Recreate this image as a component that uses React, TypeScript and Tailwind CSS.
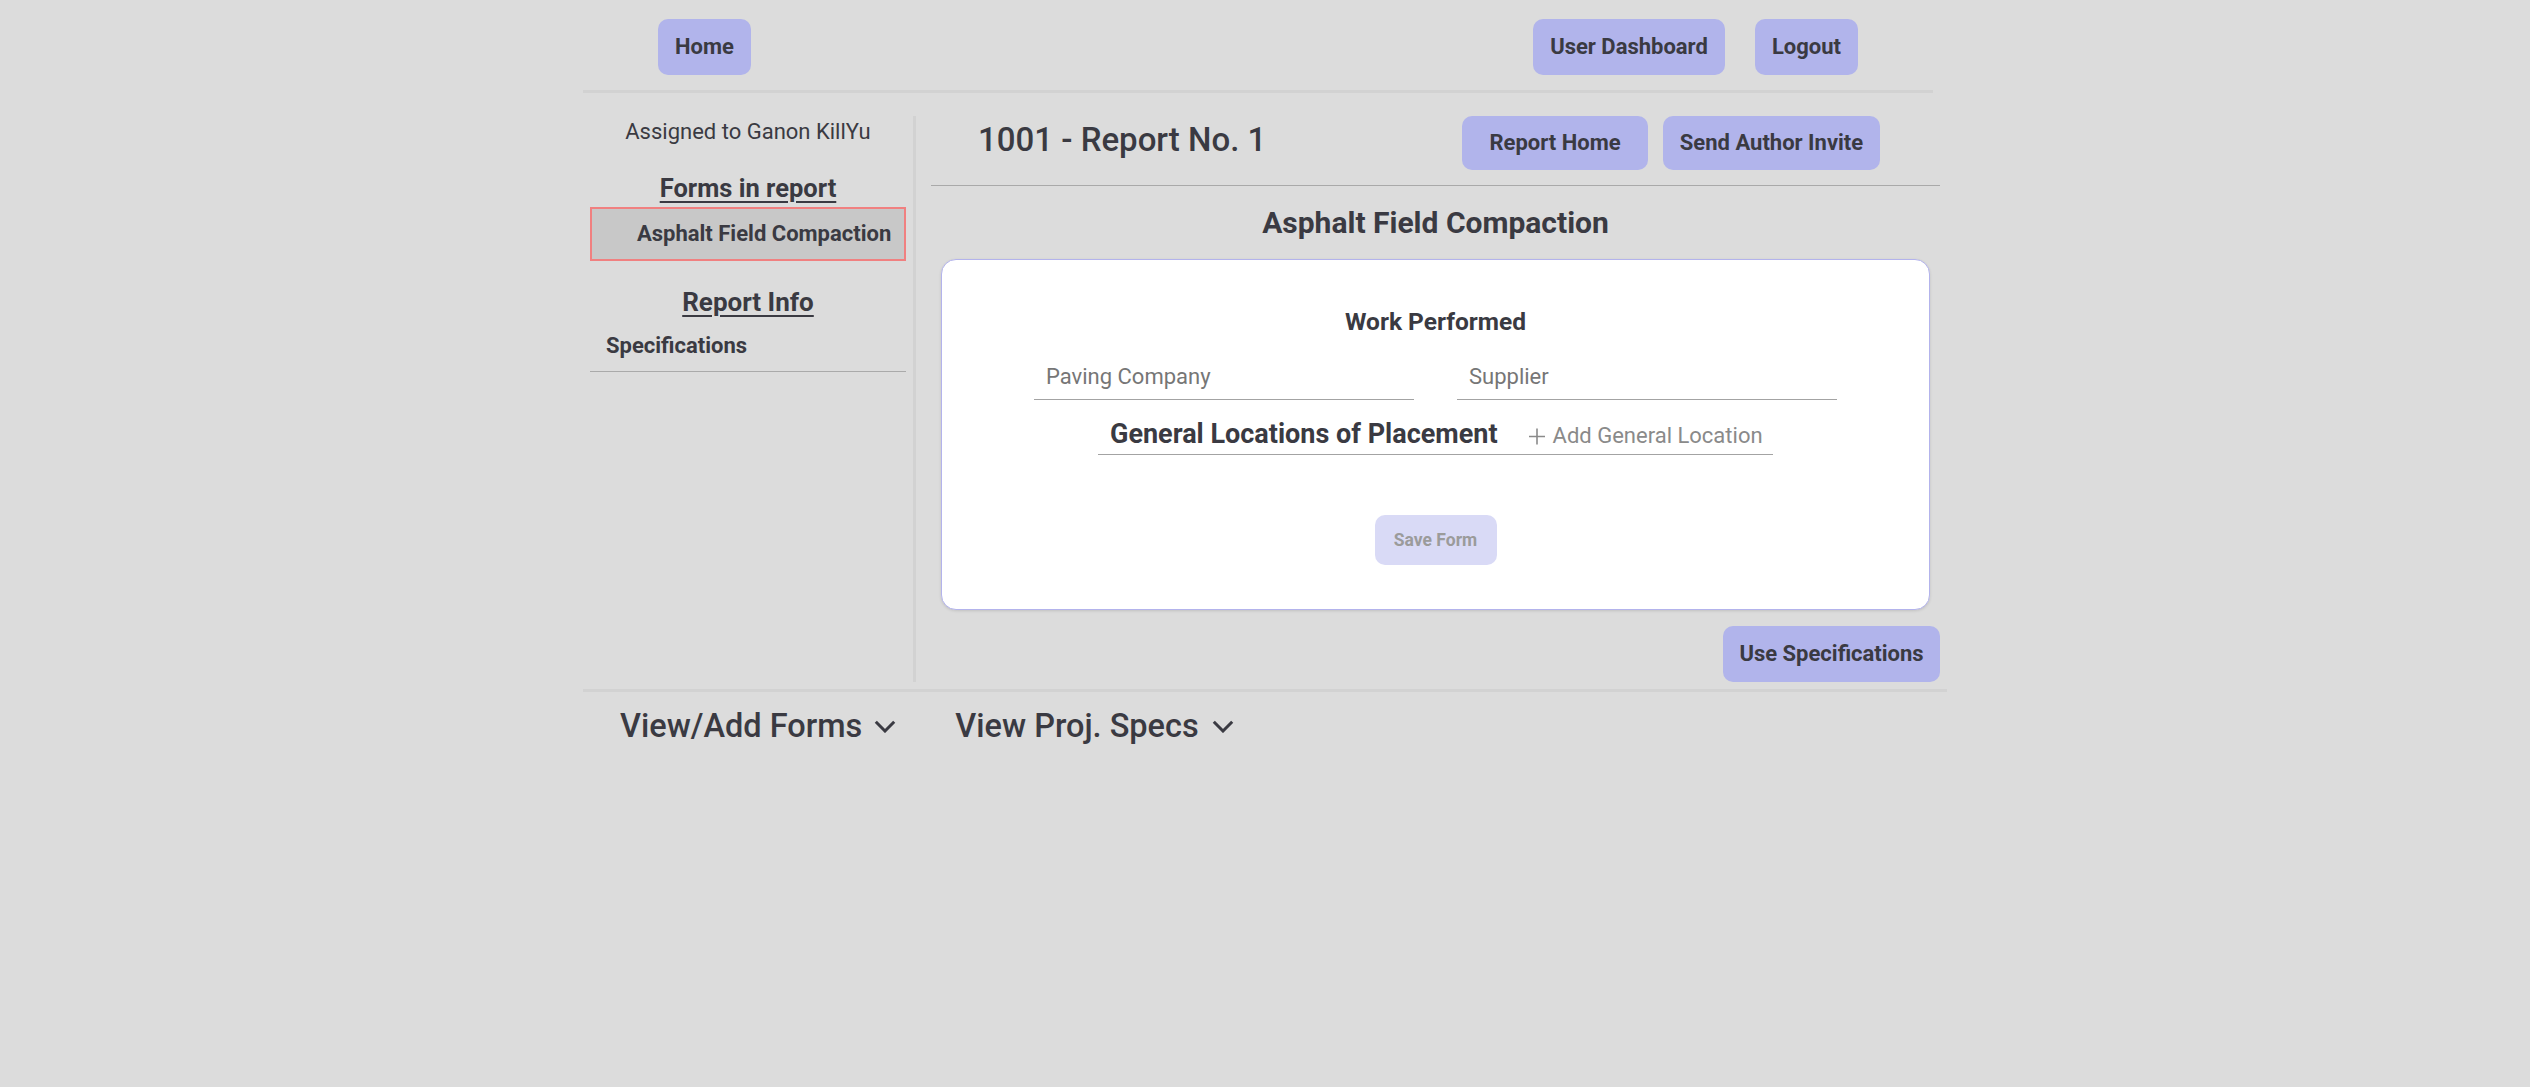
import React from "react";

const btn =
  "flex items-center justify-center rounded-[10px] bg-[#b1b4eb] text-[#3a3a42] font-bold text-[22px] leading-[24px]";

function Chevron() {
  return (
    <svg width="22" height="13" viewBox="0 0 22 13" fill="none" className="shrink-0">
      <polyline points="1.8,1.8 11,11 20.2,1.8" stroke="#3a3a42" strokeWidth="3" strokeLinejoin="miter" />
    </svg>
  );
}

export default function App() {
  return (
    <div className="min-h-screen bg-[#dcdcdc] font-['Roboto',sans-serif] text-[#3a3a42]">
      <div className="w-[1364px] mx-auto">
        {/* Top nav */}
        <nav className="w-[1350px] flex justify-between items-center px-[75px] pt-[19px] pb-[15px] border-b-[3px] border-[#d2d2d2]">
          <button className={`${btn} w-[93px] h-[56px]`}>Home</button>
          <div className="flex gap-[30px]">
            <button className={`${btn} w-[192px] h-[56px]`}>User Dashboard</button>
            <button className={`${btn} w-[103px] h-[56px]`}>Logout</button>
          </div>
        </nav>

        {/* Main */}
        <div className="flex pt-[23px] pb-[7px] border-b-[3px] border-[#d2d2d2]">
          <aside className="w-[333px] shrink-0 border-r-[3px] border-[#d2d2d2] px-[7px] pt-[4px]">
            <div className="text-center text-[22px] leading-[24px]">Assigned to Ganon KillYu</div>
            <div className="mt-[29px] text-center text-[25.5px] leading-[30px] font-bold underline underline-offset-[4px] decoration-[2px]">
              Forms in report
            </div>
            <div className="mt-[4px] h-[54px] border-2 border-[#f08080] bg-[#c8c8c8] flex items-center pl-[45px] text-[22px] leading-[24px] font-bold">
              Asphalt Field Compaction
            </div>
            <div className="mt-[26px] text-center text-[26px] leading-[30px] font-bold underline underline-offset-[4px] decoration-[2px]">
              Report Info
            </div>
            <div className="mt-[17px] pl-[16px] pb-[13px] border-b border-[#aaaaaa] text-[22px] leading-[24px] font-bold">
              Specifications
            </div>
          </aside>

          <main className="flex-1 pl-[15px] pr-[7px] flex flex-col">
            <div className="flex items-start pb-[15px] border-b border-[#a9a9a9]">
              <h1 className="pl-[47px] mt-[5px] text-[33px] leading-[38px] font-medium">1001 - Report No. 1</h1>
              <div className="ml-auto mr-[60px] flex gap-[15px]">
                <button className={`${btn} w-[186px] h-[54px]`}>Report Home</button>
                <button className={`${btn} w-[217px] h-[54px]`}>Send Author Invite</button>
              </div>
            </div>

            <h2 className="mt-[20px] text-center text-[30px] leading-[34px] font-bold">Asphalt Field Compaction</h2>

            <div className="mt-[19px] mx-[10px] bg-white border border-[#b3b3ec] rounded-[15px] shadow-[0_1px_3px_rgba(0,0,0,0.12)] pt-[48px] pb-[44px] flex flex-col items-center">
              <div className="text-[24.5px] leading-[28px] font-bold">Work Performed</div>
              <div className="mt-[28px] flex gap-[43px]">
                <input
                  placeholder="Paving Company"
                  className="w-[380px] h-[36px] pl-[12px] pb-[11px] bg-transparent outline-none border-b border-[#a3a3a3] text-[22px] leading-[24px] placeholder:text-[#767676]"
                />
                <input
                  placeholder="Supplier"
                  className="w-[380px] h-[36px] pl-[12px] pb-[11px] bg-transparent outline-none border-b border-[#a3a3a3] text-[22px] leading-[24px] placeholder:text-[#767676]"
                />
              </div>
              <div className="mt-[18px] w-[675px] flex items-baseline pl-[12px] pb-[4px] border-b border-[#a3a3a3]">
                <span className="text-[27px] leading-[32px] font-bold">General Locations of Placement</span>
                <span className="ml-[31px] flex items-baseline text-[#8a8a8a]">
                  <svg width="16" height="17" viewBox="0 0 16 17" className="self-start mt-[4px]" fill="none">
                    <path d="M8 0.5V16.5M0 8.5H16" stroke="#8a8a8a" strokeWidth="1.6" />
                  </svg>
                  <span className="ml-[8px] text-[22px] leading-[24px]">Add General Location</span>
                </span>
              </div>
              <button className="mt-[60px] w-[122px] h-[50px] rounded-[10px] bg-[#d9daf6] text-[#9b9b9b] font-bold text-[17.5px]">
                Save Form
              </button>
            </div>

            <div className="mt-[16px] flex justify-end">
              <button className={`${btn} w-[217px] h-[56px]`}>Use Specifications</button>
            </div>
          </main>
        </div>

        {/* Bottom */}
        <div className="flex items-center pl-[37px] pt-[15px]">
          <div className="flex items-center gap-[12px]">
            <span className="text-[32.5px] leading-[38px] font-medium">View/Add Forms</span>
            <Chevron />
          </div>
          <div className="ml-[59px] flex items-center gap-[13px]">
            <span className="text-[32.5px] leading-[38px] font-medium">View Proj. Specs</span>
            <Chevron />
          </div>
        </div>
      </div>
    </div>
  );
}
